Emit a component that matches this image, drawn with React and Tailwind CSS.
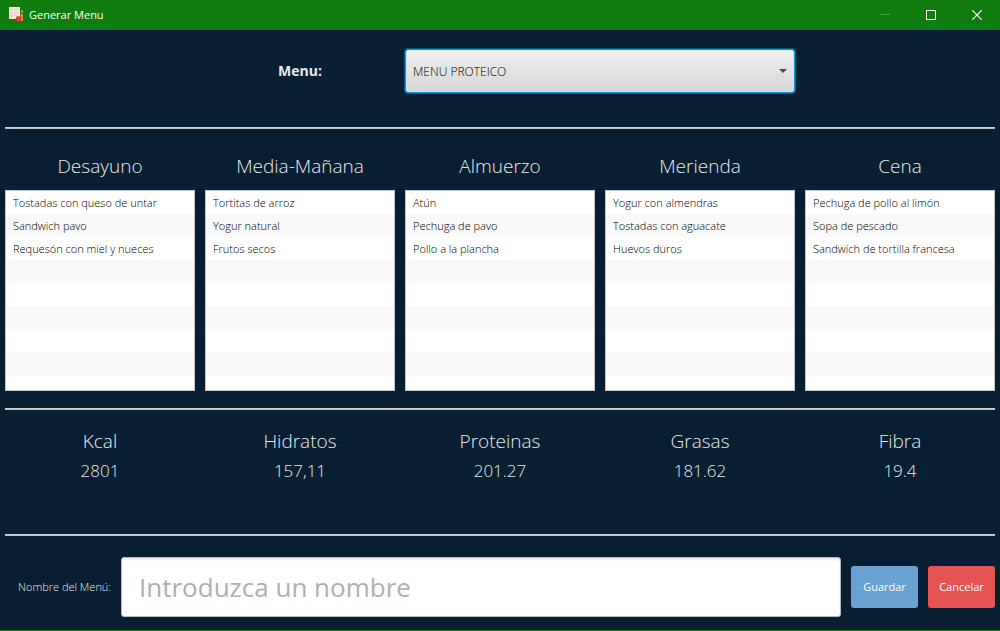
import { useState } from "react";

const meals = [
  { name: "Desayuno", items: ["Tostadas con queso de untar", "Sandwich pavo", "Requesón con miel y nueces"] },
  { name: "Media-Mañana", items: ["Tortitas de arroz", "Yogur natural", "Frutos secos"] },
  { name: "Almuerzo", items: ["Atún", "Pechuga de pavo", "Pollo a la plancha"] },
  { name: "Merienda", items: ["Yogur con almendras", "Tostadas con aguacate", "Huevos duros"] },
  { name: "Cena", items: ["Pechuga de pollo al limón", "Sopa de pescado", "Sandwich de tortilla francesa"] },
];

const totals = [
  { name: "Kcal", value: "2801" },
  { name: "Hidratos", value: "157,11" },
  { name: "Proteinas", value: "201.27" },
  { name: "Grasas", value: "181.62" },
  { name: "Fibra", value: "19.4" },
];

const ROWS = 9;

function AppIcon() {
  return (
    <svg width="16" height="16" viewBox="0 0 16 16" aria-hidden="true">
      <rect x="1" y="0" width="11" height="12" fill="#f6e6d6" />
      <path d="M2.500 2.500l1 1 1.300-1.700M2.500 5.500l1 1 1.300-1.700M2.500 8.500l1 1 1.300-1.700" fill="none" stroke="#eda3a0" strokeWidth="0.800" />
      <path d="M6 2.500h4M6 5.500h4M6 8.500h3" stroke="#e6ccb9" strokeWidth="1" />
      <rect x="13" y="3" width="2" height="3" rx="1" fill="#b3a06a" />
      <path d="M12.500 7h2.500v7h-2.500z" fill="#f0812c" />
      <path d="M8 11c0-1.600 1.500-2 2.500-1.300 1-.7 2.700-.3 2.700 1.300 0 1.900-1.300 3.500-2.600 3.500S8 12.900 8 11z" fill="#e63c3c" />
    </svg>
  );
}

function TitleBar() {
  return (
    <header className="flex h-[30px] items-center bg-[#107c10] pl-2 text-white">
      <AppIcon />
      <h1 className="ml-[5px] flex-1 text-[11px] leading-4">Generar Menu</h1>
      <button type="button" disabled aria-label="Minimizar" className="flex h-full w-[46px] items-center justify-center">
        <svg width="10" height="10" viewBox="0 0 10 10" aria-hidden="true">
          <path d="M0 4.500h10" stroke="#4c9c4c" />
        </svg>
      </button>
      <button type="button" aria-label="Maximizar" className="flex h-full w-[46px] items-center justify-center">
        <svg width="10" height="10" viewBox="0 0 10 10" aria-hidden="true">
          <rect x="0.5" y="0.5" width="9" height="9" fill="none" stroke="#fff" />
        </svg>
      </button>
      <button type="button" aria-label="Cerrar" className="flex h-full w-[46px] items-center justify-center">
        <svg width="10" height="10" viewBox="0 0 10 10" aria-hidden="true">
          <path d="M0.300 0.300l9.400 9.400M9.700 0.300l-9.400 9.400" stroke="#fff" strokeWidth="1.200" />
        </svg>
      </button>
    </header>
  );
}

function Separator() {
  return <hr className="h-[2px] border-0 border-t border-[#cfcfcf] bg-[#b8c0c4]" />;
}

function MealList({ name, items }) {
  const rows = Array.from({ length: ROWS }, (_, i) => items[i] ?? "");
  return (
    <section className="min-w-0">
      <h2 className="text-center text-[19px] leading-7 font-light">{name}</h2>
      <ul className="mt-[10px] h-[201px] overflow-hidden border border-[#c8c8c8] bg-white text-[11px] leading-[23px] font-light text-black">
        {rows.map((item, i) => (
          <li key={i} className="h-[23px] truncate px-[7px] even:bg-[#f9f9f9]">
            {item}
          </li>
        ))}
      </ul>
    </section>
  );
}

export default function App() {
  const [menuName, setMenuName] = useState("");
  return (
    <div className="flex min-h-screen flex-col border-b border-[#107c10] bg-[#081f33] font-['Open_Sans',sans-serif] text-[#e6e9eb]">
      <TitleBar />
      <main className="flex-1 px-[5px]">
        <div className="grid grid-cols-5 items-center gap-[10px] pt-[19px] pb-[34px]">
          <label htmlFor="menu" className="col-start-2 text-center text-[14px] leading-5 font-bold">
            Menu:
          </label>
          <div className="relative col-span-2">
            <select
              id="menu"
              className="block h-[44px] w-full appearance-none rounded-[3px] border border-[#039ed3] bg-linear-to-b from-[#f0f0f0] to-[#d6d6d6] px-[7px] pt-[2px] text-[12px] font-light text-black shadow-[0_0_1px_1px_#045f87,inset_0_0_0_1px_#cfe3ea] outline-none"
            >
              <option>MENU PROTEICO</option>
            </select>
            <svg className="pointer-events-none absolute top-5 right-2" width="8" height="4" viewBox="0 0 8 4" aria-hidden="true">
              <path d="M0 0h8L4 4z" fill="#4a4a4a" />
            </svg>
          </div>
        </div>
        <Separator />
        <div className="grid grid-cols-5 gap-[10px] pt-[23px] pb-[17px]">
          {meals.map((meal) => (
            <MealList key={meal.name} {...meal} />
          ))}
        </div>
        <Separator />
        <dl className="grid grid-cols-5 gap-[10px] pt-4 pb-[48px] text-center font-light">
          {totals.map((total) => (
            <div key={total.name}>
              <dt className="text-[19px] leading-[30px]">{total.name}</dt>
              <dd className="text-[17px] leading-[30px]">{total.value}</dd>
            </div>
          ))}
        </dl>
        <Separator />
        <form className="flex items-center gap-[10px] pt-[21px] pb-[13px]" onSubmit={(e) => e.preventDefault()}>
          <label htmlFor="nombre" className="w-[106px] text-right text-[11px] leading-4 font-light whitespace-nowrap">
            Nombre del Menú:
          </label>
          <input
            id="nombre"
            type="text"
            value={menuName}
            onChange={(e) => setMenuName(e.target.value)}
            placeholder="Introduzca un nombre"
            className="h-[60px] min-w-0 flex-1 rounded-[3px] border border-[#b9b9b9] bg-white px-[17px] text-[26px] text-[#222] shadow-[inset_0_2px_2px_#ececec] outline-none placeholder:text-[#b0b0b0]"
          />
          <button type="submit" className="h-[42px] w-[67px] rounded-[3px] bg-[#69a2d0] text-[11px] font-medium text-white">
            Guardar
          </button>
          <button type="button" className="h-[42px] w-[67px] rounded-[3px] bg-[#e55353] text-[11px] font-medium text-white">
            Cancelar
          </button>
        </form>
      </main>
    </div>
  );
}
